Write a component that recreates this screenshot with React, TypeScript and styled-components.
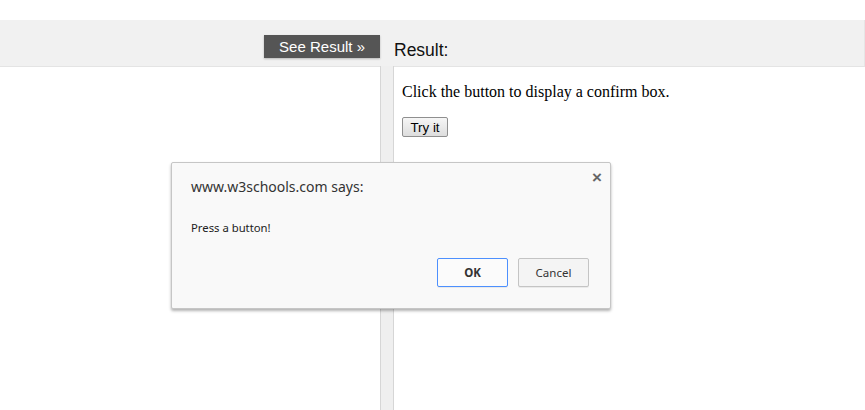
import React from "react";
import styled, { createGlobalStyle } from "styled-components";

const Global = createGlobalStyle`
  html, body, #root { height: 100%; }
  body { margin: 0; background: #ffffff; overflow: hidden; }
`;

const Page = styled.div`
  position: relative;
  height: 100%;
  display: flex;
  flex-direction: column;
  padding-top: 20px;
  box-sizing: border-box;
  font-family: "Liberation Sans", Arial, sans-serif;
`;

const Columns = styled.div`
  display: grid;
  grid-template-columns: 380px 14px 1fr;
`;

const Band = styled(Columns)`
  height: 46px;
  background: #f1f1f1;
  border-right: 1px solid #e6e6e6;
`;

const BandLeft = styled.div`
  display: flex;
  justify-content: flex-end;
  align-items: flex-start;
  padding-top: 15px;
`;

const SeeResult = styled.button`
  height: 23px;
  padding: 0 15px;
  border: none;
  border-radius: 0;
  background: #555555;
  color: #ffffff;
  font-family: "Liberation Sans", Arial, sans-serif;
  font-size: 15px;
  line-height: 23px;
  box-shadow: 0 1px 2px rgba(0, 0, 0, 0.25);
  cursor: pointer;
`;

const ResultLabel = styled.div`
  grid-column: 3;
  padding-top: 20px;
  font-size: 17.5px;
  line-height: 21px;
  color: #111;
`;

const Body = styled(Columns)`
  flex: 1;
`;

const Panel = styled.div`
  background: #ffffff;
  border-top: 1px solid #e4e4e4;
`;

const Gutter = styled.div`
  background: #efefef;
  border-left: 1px solid #d6d6d6;
  border-right: 1px solid #d6d6d6;
`;

const ResultPanel = styled(Panel)`
  padding: 0 8px;
  font-family: "Liberation Serif", "Times New Roman", serif;
  font-size: 16px;
  color: #000;
`;

const Para = styled.p`
  margin: 16px 0;
  line-height: 18px;
`;

const TryButton = styled.button`
  width: 46px;
  height: 20px;
  padding: 0;
  font-family: "Liberation Sans", Arial, sans-serif;
  font-size: 13.33px;
  color: #000;
  border: 1px solid #8f8f8f;
  border-radius: 2px;
  background: linear-gradient(#f6f6f6, #dddddd);
`;

const Dialog = styled.div`
  position: absolute;
  left: 171px;
  top: 162px;
  width: 440px;
  height: 147px;
  box-sizing: border-box;
  background: #f9f9f9;
  border: 1px solid #c6c6c6;
  box-shadow: 0 2px 3px rgba(0, 0, 0, 0.3);
  border-radius: 2px;
  padding: 14px 21px 21px 19px;
  display: flex;
  flex-direction: column;
  font-family: "Noto Sans", "Open Sans", sans-serif;
`;

const Close = styled.span`
  position: absolute;
  right: 8px;
  top: 5px;
  font-family: "Liberation Sans", Arial, sans-serif;
  font-size: 17px;
  font-weight: bold;
  color: #666;
`;

const Title = styled.div`
  font-size: 14px;
  line-height: 20px;
  color: #333;
`;

const Message = styled.div`
  margin-top: 23px;
  font-size: 11.3px;
  line-height: 16px;
  color: #222;
`;

const Actions = styled.div`
  margin-top: auto;
  display: flex;
  justify-content: flex-end;
  gap: 10px;
`;

const DlgButton = styled.button<{ $primary?: boolean }>`
  width: 71px;
  height: 29px;
  box-sizing: border-box;
  border-radius: 2px;
  border: 1px solid ${(p) => (p.$primary ? "#4d90fe" : "#c4c4c4")};
  background: ${(p) => (p.$primary ? "#fbfbfb" : "#f4f4f4")};
  font-family: "Noto Sans", "Open Sans", sans-serif;
  font-size: 11.5px;
  font-weight: ${(p) => (p.$primary ? 700 : 400)};
  color: #333;
  box-shadow: 0 1px 0 rgba(0, 0, 0, 0.06);
`;

export default function App() {
  return (
    <Page>
      <Global />
      <Band>
        <BandLeft>
          <SeeResult>See Result »</SeeResult>
        </BandLeft>
        <ResultLabel>Result:</ResultLabel>
      </Band>
      <Body>
        <Panel />
        <Gutter />
        <ResultPanel>
          <Para>Click the button to display a confirm box.</Para>
          <TryButton>Try it</TryButton>
        </ResultPanel>
      </Body>
      <Dialog>
        <Close>×</Close>
        <Title>www.w3schools.com says:</Title>
        <Message>Press a button!</Message>
        <Actions>
          <DlgButton $primary>OK</DlgButton>
          <DlgButton>Cancel</DlgButton>
        </Actions>
      </Dialog>
    </Page>
  );
}
